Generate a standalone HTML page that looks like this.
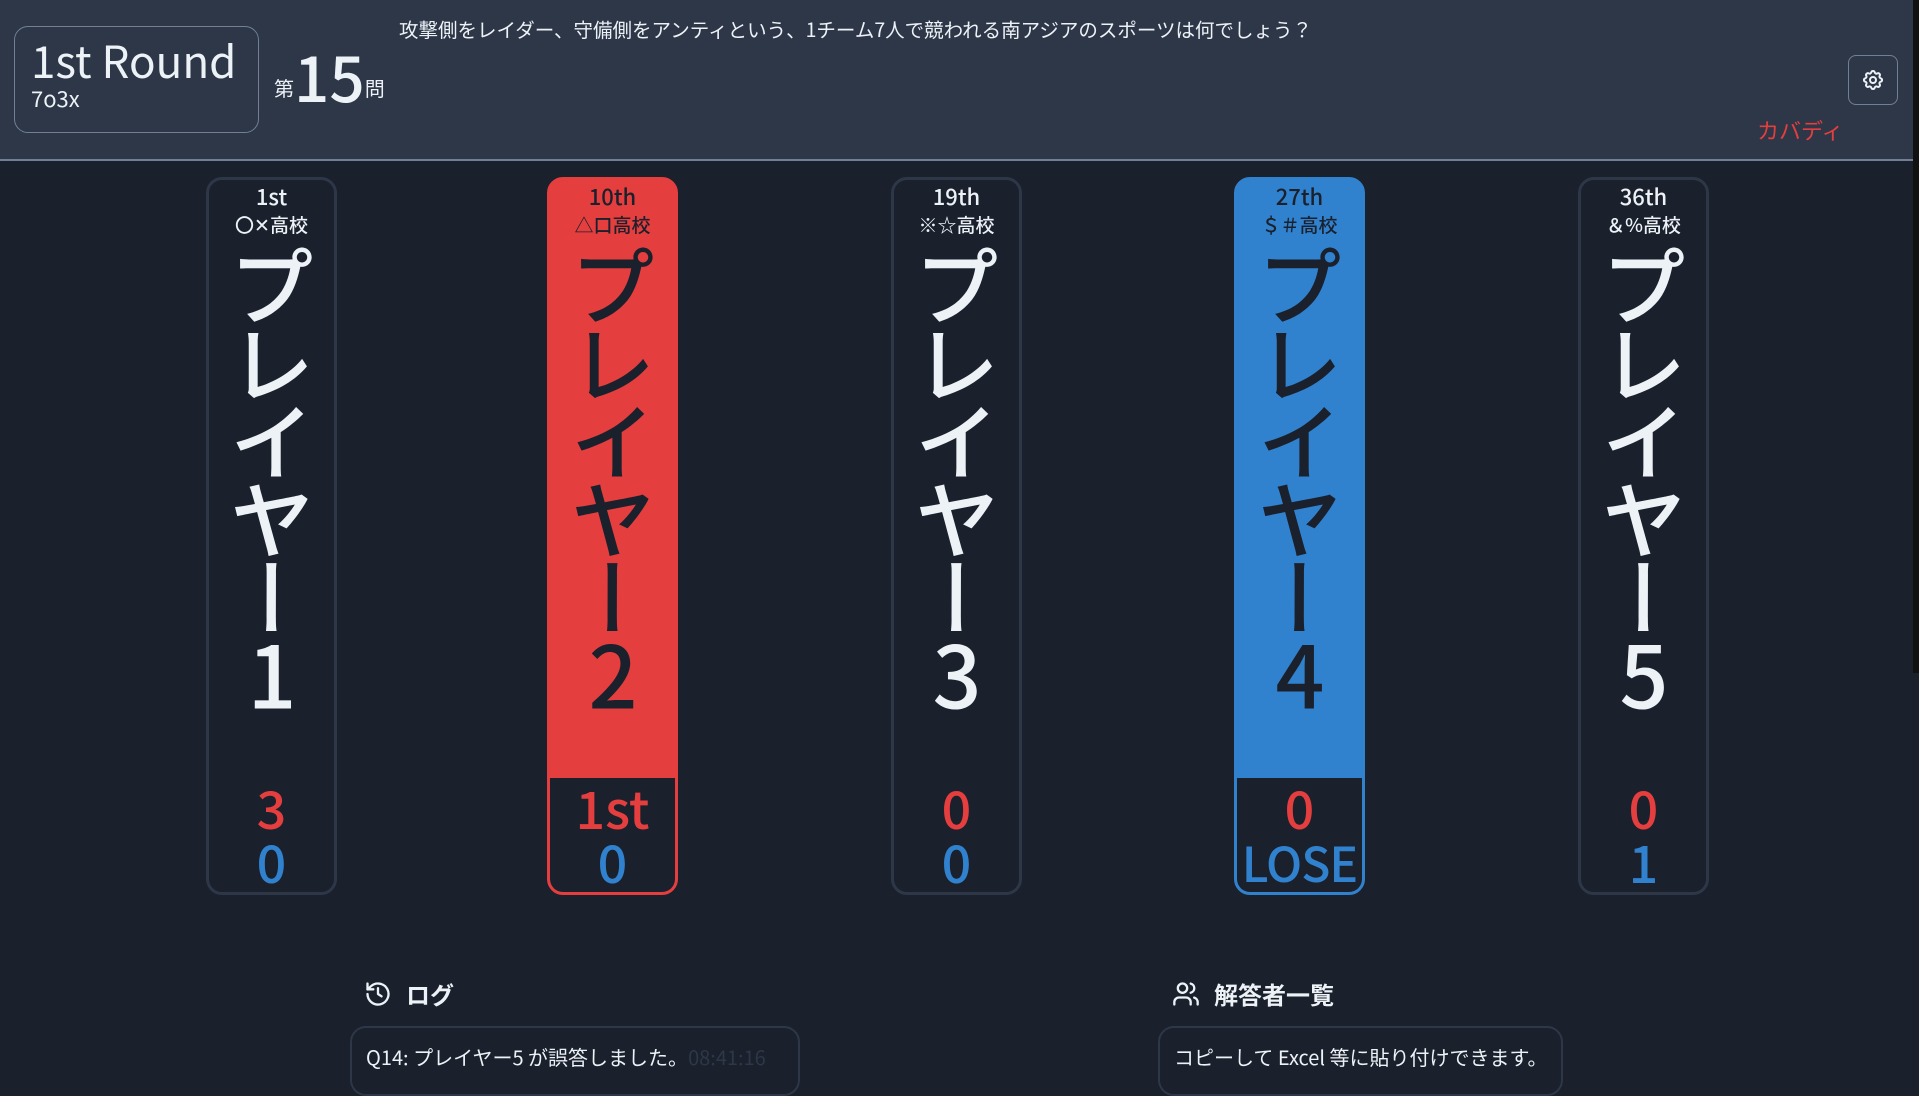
<!DOCTYPE html>
<html><head><meta charset="utf-8"><style>
*{box-sizing:border-box;margin:0;padding:0}
body{width:1919px;height:1079px;overflow:hidden;background:#1a202c;color:#edf2f7;font-family:"Noto Sans CJK JP","Liberation Sans",sans-serif;position:relative}
.hdr{position:absolute;left:0;top:0;width:1919px;height:161px;background:#2d3748;border-bottom:2px solid #718096}
.round{position:absolute;left:14px;top:26px;width:245px;height:107px;border:1px solid #718096;border-radius:14px;padding:6px 16px;white-space:nowrap}
.round .t{font-size:44px;line-height:52px}
.round .s{font-size:22px;line-height:26px}
.qn{position:absolute;left:274px;top:40px;font-size:20px}
.qn b{font-size:62px;font-weight:500;line-height:70px;vertical-align:-6px}
.q{position:absolute;left:399px;top:14px;font-size:19.5px;white-space:nowrap}
.gear{position:absolute;left:1848px;top:55px;width:50px;height:50px;border:1px solid #718096;border-radius:8px;display:flex;align-items:center;justify-content:center}
.ans{position:absolute;left:1757px;top:114px;font-size:22px;color:#e53e3e}
.card{position:absolute;top:177px;width:131px;height:718px;border:3px solid #2d3748;border-radius:16px;overflow:hidden;text-align:center}
.rank{position:absolute;top:0px;width:100%;font-size:22px;font-weight:500}
.sch{position:absolute;top:31px;width:100%;font-size:19px;font-weight:500}
.nm{position:absolute;top:52px;left:50%;transform:translateX(-50%);writing-mode:vertical-rl;text-orientation:upright;font-size:86px;letter-spacing:-8px;line-height:1;height:490px;font-weight:500}
.bot{position:absolute;left:0;bottom:0;width:100%;height:114px;}
.sc{position:absolute;width:100%;font-size:52px;font-weight:500;line-height:1}
.r{color:#e53e3e}.bl{color:#3182ce}
.h2{position:absolute;top:976px;font-size:24px;font-weight:700;display:flex;align-items:center;gap:14px}
.box{position:absolute;top:1026px;height:70px;border:2px solid #2d3748;border-radius:16px;padding:14px 14px;font-size:20px;white-space:nowrap}
</style></head><body>
<div class="hdr">
 <div class="round"><div class="t">1st Round</div><div class="s">7o3x</div></div>
 <div class="qn">第<b>15</b>問</div>
 <div class="q">攻撃側をレイダー、守備側をアンティという、1チーム7人で競われる南アジアのスポーツは何でしょう？</div>
 <div class="gear"><svg width="24" height="24" viewBox="0 0 24 24" fill="none" stroke="#edf2f7" stroke-width="2" stroke-linecap="round" stroke-linejoin="round"><path d="M10.3 4.3c.4-1.8 3-1.8 3.4 0a1.7 1.7 0 0 0 2.6 1.1c1.5-.9 3.3.8 2.4 2.4a1.7 1.7 0 0 0 1 2.5c1.8.4 1.8 3 0 3.4a1.7 1.7 0 0 0-1 2.6c.9 1.5-.9 3.3-2.4 2.4a1.7 1.7 0 0 0-2.6 1c-.4 1.8-3 1.8-3.4 0a1.7 1.7 0 0 0-2.6-1c-1.5.9-3.3-.9-2.4-2.4a1.7 1.7 0 0 0-1-2.6c-1.8-.4-1.8-3 0-3.4a1.7 1.7 0 0 0 1-2.5c-.9-1.6.9-3.3 2.4-2.4 1 .6 2.3.1 2.6-1.1z"/><circle cx="12" cy="12" r="3"/></svg></div>
 <div class="ans">カバディ</div>
</div>
<div style="position:absolute;left:1913px;top:0;width:6px;height:673px;background:#111"></div>

<div class="card" style="left:206px"><div class="rank">1st</div><div class="sch">〇✕高校</div><div class="nm">プレイヤー1</div>
<div class="sc r" style="top:601px">3</div><div class="sc bl" style="top:655px">0</div></div>

<div class="card" style="left:547px;background:#e53e3e;border-color:#e53e3e;color:#1a202c"><div class="rank">10th</div><div class="sch">△口高校</div><div class="nm">プレイヤー2</div>
<div class="bot" style="background:#1a202c"></div>
<div class="sc r" style="top:601px">1st</div><div class="sc bl" style="top:655px">0</div></div>

<div class="card" style="left:891px"><div class="rank">19th</div><div class="sch">※☆高校</div><div class="nm">プレイヤー3</div>
<div class="sc r" style="top:601px">0</div><div class="sc bl" style="top:655px">0</div></div>

<div class="card" style="left:1234px;background:#3182ce;border-color:#3182ce;color:#1a202c"><div class="rank">27th</div><div class="sch">＄＃高校</div><div class="nm">プレイヤー4</div>
<div class="bot" style="background:#1a202c"></div>
<div class="sc r" style="top:601px">0</div><div class="sc bl" style="top:657px;font-size:48px;letter-spacing:-1px">LOSE</div></div>

<div class="card" style="left:1578px"><div class="rank">36th</div><div class="sch">＆%高校</div><div class="nm">プレイヤー5</div>
<div class="sc r" style="top:601px">0</div><div class="sc bl" style="top:655px">1</div></div>

<div class="h2" style="left:364px"><svg width="28" height="28" viewBox="0 0 24 24" fill="none" stroke="#edf2f7" stroke-width="2" stroke-linecap="round" stroke-linejoin="round"><path d="M3 12a9 9 0 1 0 3-6.7L3 8"/><path d="M3 3v5h5"/><path d="M12 7v5l3 2"/></svg>ログ</div>
<div class="box" style="left:350px;width:450px">Q14: プレイヤー5 が誤答しました。<span style="color:#2d3748">08:41:16</span></div>
<div class="h2" style="left:1172px"><svg width="28" height="28" viewBox="0 0 24 24" fill="none" stroke="#edf2f7" stroke-width="2" stroke-linecap="round" stroke-linejoin="round"><circle cx="9" cy="7" r="4"/><path d="M2 21v-2a4 4 0 0 1 4-4h6a4 4 0 0 1 4 4v2"/><path d="M16 3.1a4 4 0 0 1 0 7.8"/><path d="M22 21v-2a4 4 0 0 0-3-3.9"/></svg>解答者一覧</div>
<div class="box" style="left:1158px;width:405px">コピーして Excel 等に貼り付けできます。</div>
</body></html>
